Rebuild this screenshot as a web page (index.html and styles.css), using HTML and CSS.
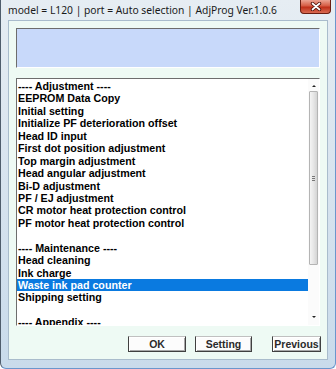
FILE: index.html
```html
<!DOCTYPE html>
<html lang="en">
<head>
    <meta charset="UTF-8">
    <meta name="viewport" content="width=device-width, initial-scale=1.0">
    <title>AdjProg</title>
    <link rel="stylesheet" href="styles.css">
</head>
<body>
    <div class="window">
        <div class="title-bar">
            <span class="title-text">model = L120 | port = Auto selection | AdjProg Ver.1.0.6</span>
        </div>
        <div class="win-x">
            <svg class="win-x-icon" width="12" height="9" viewBox="0 0 12 9">
                <path d="M2.5 1.5 L9.5 7.5 M9.5 1.5 L2.5 7.5" stroke="#4a0e05" stroke-width="3.4" stroke-linecap="round"/>
                <path d="M2.5 1.5 L9.5 7.5 M9.5 1.5 L2.5 7.5" stroke="#ffffff" stroke-width="1.7" stroke-linecap="round"/>
            </svg>
        </div>
        <div class="client">
            <div class="info-box"></div>
            <div class="list-box">
                <div class="list-items">
                    <div class="item">---- Adjustment ----</div>
                    <div class="item">EEPROM Data Copy</div>
                    <div class="item">Initial setting</div>
                    <div class="item">Initialize PF deterioration offset</div>
                    <div class="item">Head ID input</div>
                    <div class="item">First dot position adjustment</div>
                    <div class="item">Top margin adjustment</div>
                    <div class="item">Head angular adjustment</div>
                    <div class="item">Bi-D adjustment</div>
                    <div class="item">PF / EJ adjustment</div>
                    <div class="item">CR motor heat protection control</div>
                    <div class="item">PF motor heat protection control</div>
                    <div class="item">&nbsp;</div>
                    <div class="item">---- Maintenance ----</div>
                    <div class="item">Head cleaning</div>
                    <div class="item">Ink charge</div>
                    <div class="item selected">Waste ink pad counter</div>
                    <div class="item">Shipping setting</div>
                    <div class="item">&nbsp;</div>
                    <div class="item">---- Appendix ----</div>
                </div>
                <div class="scrollbar">
                    <div class="arrow arrow-up"></div>
                    <div class="track">
                        <div class="thumb"><span class="grip"></span></div>
                    </div>
                    <div class="arrow arrow-down"></div>
                </div>
            </div>
            <div class="button-row">
                <button class="btn btn-ok">OK</button>
                <button class="btn btn-setting">Setting</button>
                <button class="btn btn-prev">Previous</button>
            </div>
        </div>
    </div>
</body>
</html>
```

FILE: styles.css
```css
body {
    margin: 0;
    padding: 0;
    width: 336px;
    height: 369px;
    overflow: hidden;
    background: #ffffff;
}

/* Window frame */
.window {
    position: relative;
    box-sizing: border-box;
    width: 336px;
    height: 369px;
    padding: 0 7px 8px 7px;
    background: linear-gradient(to bottom, #e6edf3 0%, #dae5ef 40%, #c9dbeb 100%);
    border: 1px solid #4f5d6c;
    border-top: none;
    border-right-color: #6b96cc;
    border-bottom-color: #6b96cc;
    border-radius: 0 0 6px 6px;
    display: flex;
    flex-direction: column;
}

/* Title bar */
.title-bar {
    height: 20px;
    flex-shrink: 0;
}

.title-text {
    font-family: "Noto Sans", sans-serif;
    font-size: 10.3px;
    line-height: 21px;
    color: #1a1a1a;
    white-space: nowrap;
}

/* The X button sits over the frame corner */
.win-x {
    position: absolute;
    top: 0;
    right: 4px;
    z-index: 10;
    box-sizing: border-box;
    width: 31px;
    height: 14px;
    background-color: #c8361f;
    background-image: linear-gradient(to bottom, #eba392 0%, #d65c44 45%, #bf2f19 55%, #d96b51 100%);
    border: 1px solid #6a1e12;
    border-top-width: 0;
    border-radius: 0 0 4px 4px;
    display: flex;
    align-items: center;
    justify-content: center;
}

.win-x-icon {
    display: block;
}

/* Client area */
.client {
    flex: 1;
    background: #eefaf4;
    border: 1px solid #a9bccc;
    padding: 7px 7px 0 7px;
    display: flex;
    flex-direction: column;
}

.info-box {
    height: 38px;
    background: #c8d9fa;
    border: 1px solid #ffffff;
    border-top-color: #6d6d6d;
    border-left-color: #6d6d6d;
}

/* List box */
.list-box {
    margin-top: 10px;
    height: 246px;
    background: #ffffff;
    border: 1px solid #ffffff;
    border-top-color: #6d6d6d;
    border-left-color: #6d6d6d;
    display: flex;
    overflow: hidden;
}

.list-items {
    flex: 1;
    overflow: hidden;
    padding-top: 1px;
}

.item {
    font-family: "Liberation Sans", Arial, sans-serif;
    font-weight: bold;
    font-size: 10.7px;
    line-height: 12.44px;
    height: 12.44px;
    color: #000;
    padding-left: 1px;
    white-space: nowrap;
}

.item.selected {
    background: #0a7ae0;
    color: #ffffff;
}

.scrollbar {
    width: 11px;
    display: flex;
    flex-direction: column;
    background: #fbfbfb;
}

.arrow {
    height: 12px;
    display: flex;
    justify-content: center;
    align-items: center;
}

.arrow-up::before,
.arrow-down::before {
    content: "";
    width: 0;
    height: 0;
    border-left: 2px solid transparent;
    border-right: 2px solid transparent;
}

.arrow-up::before {
    border-bottom: 2px solid #222;
    margin-top: 1px;
}

.arrow-down::before {
    border-top: 2px solid #222;
    margin-top: -4px;
}

.track {
    flex: 1;
}

.thumb {
    height: 172px;
    margin-left: 1px;
    width: 7px;
    border: 1px solid #b4b4b4;
    border-radius: 1px;
    background: linear-gradient(to right, #f4f4f4 0%, #e6e6e6 50%, #d4d4d4 100%);
    display: flex;
    align-items: center;
    justify-content: center;
}

.grip {
    width: 3px;
    height: 5px;
    background: repeating-linear-gradient(to bottom, #777 0 1px, transparent 1px 2px);
}

/* Buttons */
.button-row {
    display: flex;
    justify-content: flex-end;
    margin-top: 10px;
    margin-right: -1px;
}

.btn {
    height: 16px;
    padding: 0;
    font-family: "Liberation Sans", Arial, sans-serif;
    font-weight: bold;
    font-size: 10.5px;
    color: #2a2a2a;
    background: #fcfcfc;
    border: 1px solid #404040;
    border-top-color: #c0c0c0;
    box-shadow: inset 1px 1px #ffffff, inset -1px -1px #a8a8a8;
}

.btn-ok {
    width: 58px;
}

.btn-setting {
    width: 57px;
    margin-left: 9px;
}

.btn-prev {
    width: 49px;
    margin-left: 20px;
}
```
